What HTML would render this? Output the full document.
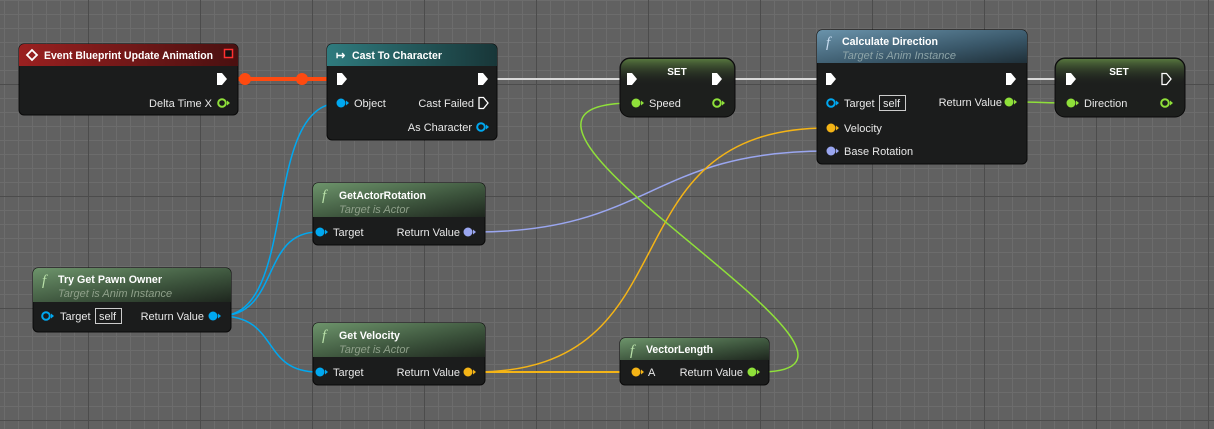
<!DOCTYPE html>
<html><head><meta charset="utf-8"><style>
html,body{margin:0;padding:0;}
body{width:1214px;height:429px;overflow:hidden;background-color:#616161;
background-image:
linear-gradient(to right,#4c4c4c 1px,transparent 1px),
linear-gradient(to bottom,#4c4c4c 1px,transparent 1px),
linear-gradient(to right,#6c6c6c 1px,transparent 1px),
linear-gradient(to bottom,#6c6c6c 1px,transparent 1px);
background-size:112px 112px,112px 112px,14px 14px,14px 14px;
background-position:88px 0,0 84px,4px 0,0 0;}
svg{position:absolute;left:0;top:0;}
text{font-family:"Liberation Sans",sans-serif;font-size:11px;fill:#e8e8e8;}
.t{font-weight:bold;fill:#fff;}
.s{font-style:italic;fill:#8fa08a;}
.r{text-anchor:end;}
</style></head><body>
<svg width="1214" height="429" viewBox="0 0 1214 429">
<defs>
<linearGradient id="gf" x1="0" y1="0" x2="1" y2="1"><stop offset="0" stop-color="#6d946b"/><stop offset="0.6" stop-color="#3b523b"/><stop offset="1" stop-color="#1e261e"/></linearGradient>
<linearGradient id="gr" x1="0" y1="0" x2="1" y2="0"><stop offset="0" stop-color="#9a2020"/><stop offset="1" stop-color="#4a1010"/></linearGradient>
<linearGradient id="gt" x1="0" y1="0" x2="1" y2="0"><stop offset="0" stop-color="#2f7b7e"/><stop offset="1" stop-color="#183638"/></linearGradient>
<linearGradient id="gb" x1="0" y1="0" x2="1" y2="1"><stop offset="0" stop-color="#6a93ab"/><stop offset="0.6" stop-color="#3a586a"/><stop offset="1" stop-color="#1f2f38"/></linearGradient>
<linearGradient id="gs" x1="0" y1="0" x2="0" y2="1"><stop offset="0" stop-color="#6e9a4c" stop-opacity="0.7"/><stop offset="1" stop-color="#202420" stop-opacity="0"/></linearGradient>
</defs>
<g fill="none" stroke-width="1.5">
<path d="M497 79 H620 M735 79 H817 M1027 79 H1055" stroke="#d8d8d8" stroke-width="2"/>
<path d="M220 316 C300 316,260 103,340 103" stroke="#00a8f0"/>
<path d="M220 316 C280 316,260 232,318 232" stroke="#00a8f0"/>
<path d="M220 316 C280 316,260 372,318 372" stroke="#00a8f0"/>
<path d="M475 232 C650 232,650 151,828 151" stroke="#9aa6f0"/>
<path d="M475 372 C700 372,600 128,828 128" stroke="#f4b416"/>
<path d="M475 372 H633" stroke="#f4b416" stroke-width="2"/>
<path d="M759 372 C940 372,420 103,633 103" stroke="#8fe03a"/>
<path d="M1016 102 C1040 102,1045 103,1068 103" stroke="#8fe03a"/>
</g>
<path d="M228 79 H340" stroke="#ff4a10" stroke-width="4"/>
<circle cx="245" cy="79" r="6" fill="#ff4a10"/><circle cx="302" cy="79" r="6" fill="#ff4a10"/>

<rect x="19" y="44" width="219" height="71" rx="5" fill="#1b1c1c" stroke="#0a0a0a"/>
<path d="M24 44 h209 a5 5 0 0 1 5 5 v17 h-219 v-17 a5 5 0 0 1 5 -5z" fill="url(#gr)"/>
<path d="M32 50 l5 5 l-5 5 l-5 -5z" fill="none" stroke="#fff" stroke-width="1.8"/>
<rect x="224.5" y="49.5" width="8" height="8" fill="#111" stroke="#ff3030" stroke-width="1.5"/>
<text class="t" x="44" y="59" textLength="169" lengthAdjust="spacingAndGlyphs">Event Blueprint Update Animation</text>
<path d="M217 73 h5 l5 6 l-5 6 h-5z" fill="#fff"/>
<text class="r" x="212" y="107">Delta Time X</text>
<circle cx="222" cy="103" r="3.8" fill="none" stroke="#8fe03a" stroke-width="2"/><path d="M227 100.5 l3 2.5 l-3 2.5z" fill="#8fe03a"/>

<rect x="327" y="44" width="170" height="96" rx="5" fill="#1b1c1c" stroke="#0a0a0a"/>
<path d="M332 44 h160 a5 5 0 0 1 5 5 v17 h-170 v-17 a5 5 0 0 1 5 -5z" fill="url(#gt)"/>
<text class="t" x="336" y="59">↦</text>
<text class="t" x="352" y="59" textLength="90" lengthAdjust="spacingAndGlyphs">Cast To Character</text>
<path d="M337 73 h5 l5 6 l-5 6 h-5z" fill="#fff"/>
<path d="M478 73 h5 l5 6 l-5 6 h-5z" fill="#fff"/>
<circle cx="341" cy="103" r="4.5" fill="#00a8f0"/><path d="M346 100.5 l3 2.5 l-3 2.5z" fill="#00a8f0"/>
<text x="354" y="107">Object</text>
<text class="r" x="474" y="107">Cast Failed</text>
<path d="M479 97.5 h4.5 l4.5 5.5 l-4.5 5.5 h-4.5z" fill="none" stroke="#fff" stroke-width="1.3"/>
<text class="r" x="472" y="131">As Character</text>
<circle cx="481" cy="127" r="3.8" fill="none" stroke="#00a8f0" stroke-width="2"/><path d="M486 124.5 l3 2.5 l-3 2.5z" fill="#00a8f0"/>

<rect x="620" y="58" width="115" height="59" rx="10" fill="#1d1f1d" stroke="#0a0a0a"/>
<rect x="621" y="59" width="113" height="26" rx="9" fill="url(#gs)"/>
<text class="t" x="677" y="75" text-anchor="middle" style="font-size:10px">SET</text>
<path d="M627 73 h5 l5 6 l-5 6 h-5z" fill="#fff"/>
<path d="M712 73 h5 l5 6 l-5 6 h-5z" fill="#fff"/>
<circle cx="636" cy="103" r="4.5" fill="#8fe03a"/><path d="M641 100.5 l3 2.5 l-3 2.5z" fill="#8fe03a"/>
<text x="649" y="107">Speed</text>
<circle cx="717" cy="103" r="3.8" fill="none" stroke="#8fe03a" stroke-width="2"/><path d="M722 100.5 l3 2.5 l-3 2.5z" fill="#8fe03a"/>

<rect x="817" y="30" width="210" height="134" rx="5" fill="#1b1c1c" stroke="#0a0a0a"/>
<path d="M822 30 h200 a5 5 0 0 1 5 5 v28 h-210 v-28 a5 5 0 0 1 5 -5z" fill="url(#gb)"/>
<text x="826" y="47" style="font-family:'Liberation Serif',serif;font-style:italic;font-size:15px;fill:#c8dcf0">f</text>
<text class="t" x="842" y="45" textLength="96" lengthAdjust="spacingAndGlyphs">Calculate Direction</text>
<text class="s" x="842" y="59" style="fill:#8da4a8" textLength="114" lengthAdjust="spacingAndGlyphs">Target is Anim Instance</text>
<path d="M826 73 h5 l5 6 l-5 6 h-5z" fill="#fff"/>
<path d="M1006 73 h5 l5 6 l-5 6 h-5z" fill="#fff"/>
<circle cx="831" cy="103" r="3.8" fill="none" stroke="#00a8f0" stroke-width="2"/><path d="M836 100.5 l3 2.5 l-3 2.5z" fill="#00a8f0"/>
<text x="844" y="107">Target</text>
<rect x="879.5" y="95.5" width="26" height="15" fill="none" stroke="#ccc"/>
<text x="883" y="107">self</text>
<text class="r" x="1002" y="106">Return Value</text>
<circle cx="1009" cy="102" r="4.5" fill="#8fe03a"/><path d="M1014 99.5 l3 2.5 l-3 2.5z" fill="#8fe03a"/>
<circle cx="831" cy="128" r="4.5" fill="#f4b416"/><path d="M836 125.5 l3 2.5 l-3 2.5z" fill="#f4b416"/>
<text x="844" y="132">Velocity</text>
<circle cx="831" cy="151" r="4.5" fill="#9aa6f0"/><path d="M836 148.5 l3 2.5 l-3 2.5z" fill="#9aa6f0"/>
<text x="844" y="155">Base Rotation</text>

<rect x="1055" y="58" width="130" height="59" rx="10" fill="#1d1f1d" stroke="#0a0a0a"/>
<rect x="1056" y="59" width="128" height="26" rx="9" fill="url(#gs)"/>
<text class="t" x="1119" y="75" text-anchor="middle" style="font-size:10px">SET</text>
<path d="M1066 73 h5 l5 6 l-5 6 h-5z" fill="#fff"/>
<path d="M1162 73.5 h4.5 l4.5 5.5 l-4.5 5.5 h-4.5z" fill="none" stroke="#fff" stroke-width="1.3"/>
<circle cx="1071" cy="103" r="4.5" fill="#8fe03a"/><path d="M1076 100.5 l3 2.5 l-3 2.5z" fill="#8fe03a"/>
<text x="1084" y="107">Direction</text>
<circle cx="1165" cy="103" r="3.8" fill="none" stroke="#8fe03a" stroke-width="2"/><path d="M1170 100.5 l3 2.5 l-3 2.5z" fill="#8fe03a"/>

<rect x="313" y="183" width="172" height="62" rx="5" fill="#1b1c1c" stroke="#0a0a0a"/>
<path d="M318 183 h162 a5 5 0 0 1 5 5 v29 h-172 v-29 a5 5 0 0 1 5 -5z" fill="url(#gf)"/>
<text x="322" y="200" style="font-family:'Liberation Serif',serif;font-style:italic;font-size:15px;fill:#b8e0a8">f</text>
<text class="t" x="339" y="199" textLength="87" lengthAdjust="spacingAndGlyphs">GetActorRotation</text>
<text class="s" x="339" y="213">Target is Actor</text>
<circle cx="320" cy="232" r="4.5" fill="#00a8f0"/><path d="M325 229.5 l3 2.5 l-3 2.5z" fill="#00a8f0"/>
<text x="333" y="236">Target</text>
<text class="r" x="460" y="236">Return Value</text>
<circle cx="468" cy="232" r="4.5" fill="#9aa6f0"/><path d="M473 229.5 l3 2.5 l-3 2.5z" fill="#9aa6f0"/>

<rect x="33" y="268" width="198" height="64" rx="5" fill="#1b1c1c" stroke="#0a0a0a"/>
<path d="M38 268 h188 a5 5 0 0 1 5 5 v29 h-198 v-29 a5 5 0 0 1 5 -5z" fill="url(#gf)"/>
<text x="42" y="285" style="font-family:'Liberation Serif',serif;font-style:italic;font-size:15px;fill:#b8e0a8">f</text>
<text class="t" x="58" y="283" textLength="104" lengthAdjust="spacingAndGlyphs">Try Get Pawn Owner</text>
<text class="s" x="58" y="297">Target is Anim Instance</text>
<circle cx="46" cy="316" r="3.8" fill="none" stroke="#00a8f0" stroke-width="2"/><path d="M51 313.5 l3 2.5 l-3 2.5z" fill="#00a8f0"/>
<text x="60" y="320">Target</text>
<rect x="95.5" y="308.5" width="26" height="15" fill="none" stroke="#ccc"/>
<text x="99" y="320">self</text>
<text class="r" x="204" y="320">Return Value</text>
<circle cx="213" cy="316" r="4.5" fill="#00a8f0"/><path d="M218 313.5 l3 2.5 l-3 2.5z" fill="#00a8f0"/>

<rect x="313" y="323" width="172" height="62" rx="5" fill="#1b1c1c" stroke="#0a0a0a"/>
<path d="M318 323 h162 a5 5 0 0 1 5 5 v29 h-172 v-29 a5 5 0 0 1 5 -5z" fill="url(#gf)"/>
<text x="322" y="340" style="font-family:'Liberation Serif',serif;font-style:italic;font-size:15px;fill:#b8e0a8">f</text>
<text class="t" x="339" y="339" textLength="61" lengthAdjust="spacingAndGlyphs">Get Velocity</text>
<text class="s" x="339" y="353">Target is Actor</text>
<circle cx="320" cy="372" r="4.5" fill="#00a8f0"/><path d="M325 369.5 l3 2.5 l-3 2.5z" fill="#00a8f0"/>
<text x="333" y="376">Target</text>
<text class="r" x="460" y="376">Return Value</text>
<circle cx="468" cy="372" r="4.5" fill="#f4b416"/><path d="M473 369.5 l3 2.5 l-3 2.5z" fill="#f4b416"/>

<rect x="620" y="338" width="149" height="47" rx="5" fill="#1b1c1c" stroke="#0a0a0a"/>
<path d="M625 338 h139 a5 5 0 0 1 5 5 v17 h-149 v-17 a5 5 0 0 1 5 -5z" fill="url(#gf)"/>
<text x="630" y="355" style="font-family:'Liberation Serif',serif;font-style:italic;font-size:15px;fill:#b8e0a8">f</text>
<text class="t" x="646" y="353" textLength="67" lengthAdjust="spacingAndGlyphs">VectorLength</text>
<circle cx="636" cy="372" r="4.5" fill="#f4b416"/><path d="M641 369.5 l3 2.5 l-3 2.5z" fill="#f4b416"/>
<text x="648" y="376">A</text>
<text class="r" x="743" y="376">Return Value</text>
<circle cx="752" cy="372" r="4.5" fill="#8fe03a"/><path d="M757 369.5 l3 2.5 l-3 2.5z" fill="#8fe03a"/>
</svg>
</body></html>
